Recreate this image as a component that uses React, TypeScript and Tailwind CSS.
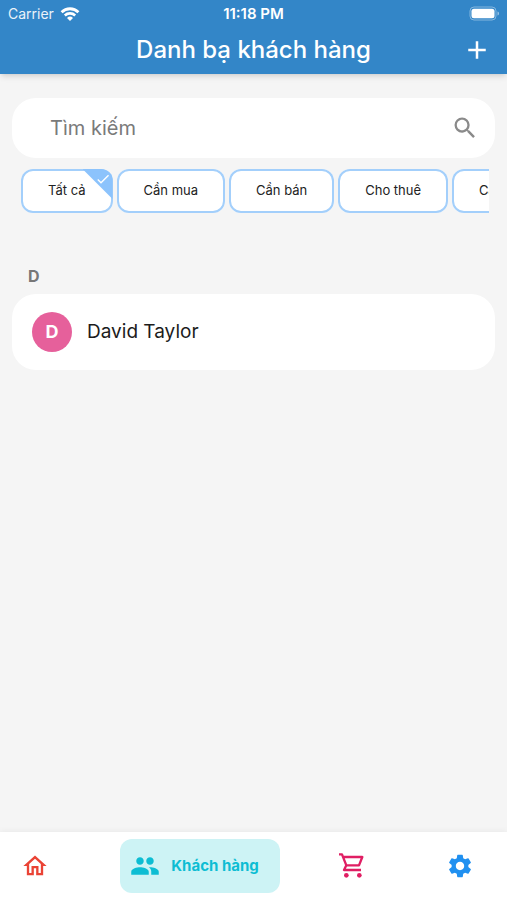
import { useState } from "react";
import { MdAdd, MdCheck, MdOutlineHome, MdPeople, MdSearch, MdSettings } from "react-icons/md";

const filters = ["Tất cả", "Cần mua", "Cần bán", "Cho thuê", "Cần thuê"];

const contacts = [{ letter: "D", names: ["David Taylor"] }];

const StatusBar = () => (
  <div className="flex h-7 items-center justify-between px-2 text-[15px]">
    <div className="flex flex-1 items-center gap-1.5">
      <span className="text-sm opacity-90">Carrier</span>
      <svg className="h-4 w-5" viewBox="0 0 20 16" fill="none" aria-hidden="true">
        <path d="M1.600 6.200a12 12 0 0 1 16.800 0" stroke="currentColor" strokeWidth="2.8" />
        <path d="M4.800 9.500a7.500 7.500 0 0 1 10.400 0" stroke="currentColor" strokeWidth="2.6" />
        <path d="M10 15l-3-3a4.300 4.300 0 0 1 6 0z" fill="currentColor" />
      </svg>
    </div>
    <span className="font-semibold">11:18 PM</span>
    <div className="flex flex-1 justify-end">
      <svg className="h-4 w-8" viewBox="0 0 32 16" fill="none" aria-hidden="true">
        <rect x="3" y="1" width="26" height="13" rx="4" stroke="currentColor" strokeOpacity="0.4" />
        <rect x="4.5" y="2.700" width="23" height="9.600" rx="2.5" fill="currentColor" />
        <path d="M30.500 5.500v4c1-.4 1.500-1.100 1.500-2s-.5-1.600-1.500-2z" fill="currentColor" fillOpacity="0.5" />
      </svg>
    </div>
  </div>
);

const CartIcon = () => (
  <svg className="h-[30px] w-[30px]" viewBox="0 0 90 90" fill="none" aria-hidden="true">
    <path
      d="M9 10h9l13 33h38l10-25H21M31 43l-7 14h51"
      stroke="currentColor"
      strokeWidth="7"
      strokeLinejoin="round"
      transform="translate(-3 0)"
    />
    <circle cx="28" cy="73" r="7" fill="currentColor" />
    <circle cx="67" cy="73" r="7" fill="currentColor" />
  </svg>
);

const FilterChip = ({
  label,
  active,
  onClick,
}: {
  label: string;
  active: boolean;
  onClick: () => void;
}) => (
  <button
    type="button"
    aria-pressed={active}
    onClick={onClick}
    className="relative h-11 shrink-0 overflow-hidden rounded-xl bg-white px-[27px] text-[13px] text-[#222] inset-ring-2 inset-ring-[#a3cffb]"
  >
    {label}
    {active && (
      <span className="absolute top-0 right-0 h-[30px] w-[30px] bg-[#8cc3fc] text-white [clip-path:polygon(0_0,100%_0,100%_100%)]">
        <MdCheck className="absolute top-0.5 right-0.5 h-4 w-4" />
      </span>
    )}
  </button>
);

export default function App() {
  const [filter, setFilter] = useState("Tất cả");
  const [query, setQuery] = useState("");

  return (
    <div className="flex min-h-screen flex-col bg-[#f5f5f5] font-['Inter','Roboto',sans-serif]">
      <header className="bg-[#3386c8] text-white shadow-md">
        <StatusBar />
        <div className="grid h-[46px] grid-cols-[48px_1fr_48px] items-center px-1.5 pb-0.5">
          <h1 className="col-start-2 text-center text-2xl font-medium">Danh bạ khách hàng</h1>
          <button type="button" aria-label="Thêm khách hàng" className="flex justify-center">
            <MdAdd className="h-[30px] w-[30px]" />
          </button>
        </div>
      </header>

      <main className="flex-1 px-3 pt-6">
        <label className="flex h-[60px] items-center rounded-3xl bg-white pr-4 pl-[38px]">
          <input
            type="text"
            aria-label="Tìm kiếm"
            placeholder="Tìm kiếm"
            value={query}
            onChange={(e) => setQuery(e.target.value)}
            className="min-w-0 flex-1 text-xl outline-none placeholder:text-[#7a7a7a]"
          />
          <MdSearch className="h-7 w-7 text-[#8a8a8a]" />
        </label>

        <div className="mt-[11px] mr-1.5 ml-[9px] flex gap-1 overflow-hidden">
          {filters.map((label) => (
            <FilterChip
              key={label}
              label={label}
              active={label === filter}
              onClick={() => setFilter(label)}
            />
          ))}
        </div>

        {contacts.map((group) => (
          <section key={group.letter} className="mt-[49px]">
            <h2 className="px-4 text-base leading-7 font-bold text-[#777]">{group.letter}</h2>
            <ul className="mt-1 rounded-3xl bg-white">
              {group.names.map((name) => (
                <li key={name} className="flex h-[76px] items-center gap-[15px] px-5">
                  <span className="flex h-10 w-10 items-center justify-center rounded-full bg-[#e6609b] text-lg font-bold text-white">
                    {name[0]}
                  </span>
                  <span className="text-[19px] text-[#1c1c1c]">{name}</span>
                </li>
              ))}
            </ul>
          </section>
        ))}
      </main>

      <nav className="flex h-17 items-center justify-between bg-white pr-6 pl-3 shadow-[0_-1px_6px_rgba(0,0,0,0.05)]">
        <a href="#home" aria-label="Trang chủ" className="flex w-[46px] justify-center text-[#ea4335]">
          <MdOutlineHome className="h-7 w-7" />
        </a>
        <a
          href="#customers"
          aria-current="page"
          className="-mr-3.5 flex h-[54px] w-40 items-center gap-[11px] rounded-xl bg-[#cdf3f5] pl-2.5 text-[15px] font-bold text-[#0dbdd3]"
        >
          <MdPeople className="h-[30px] w-[30px]" />
          Khách hàng
        </a>
        <a href="#orders" aria-label="Đơn hàng" className="flex w-[46px] justify-center text-[#e01e63]">
          <CartIcon />
        </a>
        <a href="#settings" aria-label="Cài đặt" className="flex w-[46px] justify-center text-[#2090f0]">
          <MdSettings className="h-7 w-7" />
        </a>
      </nav>
    </div>
  );
}
